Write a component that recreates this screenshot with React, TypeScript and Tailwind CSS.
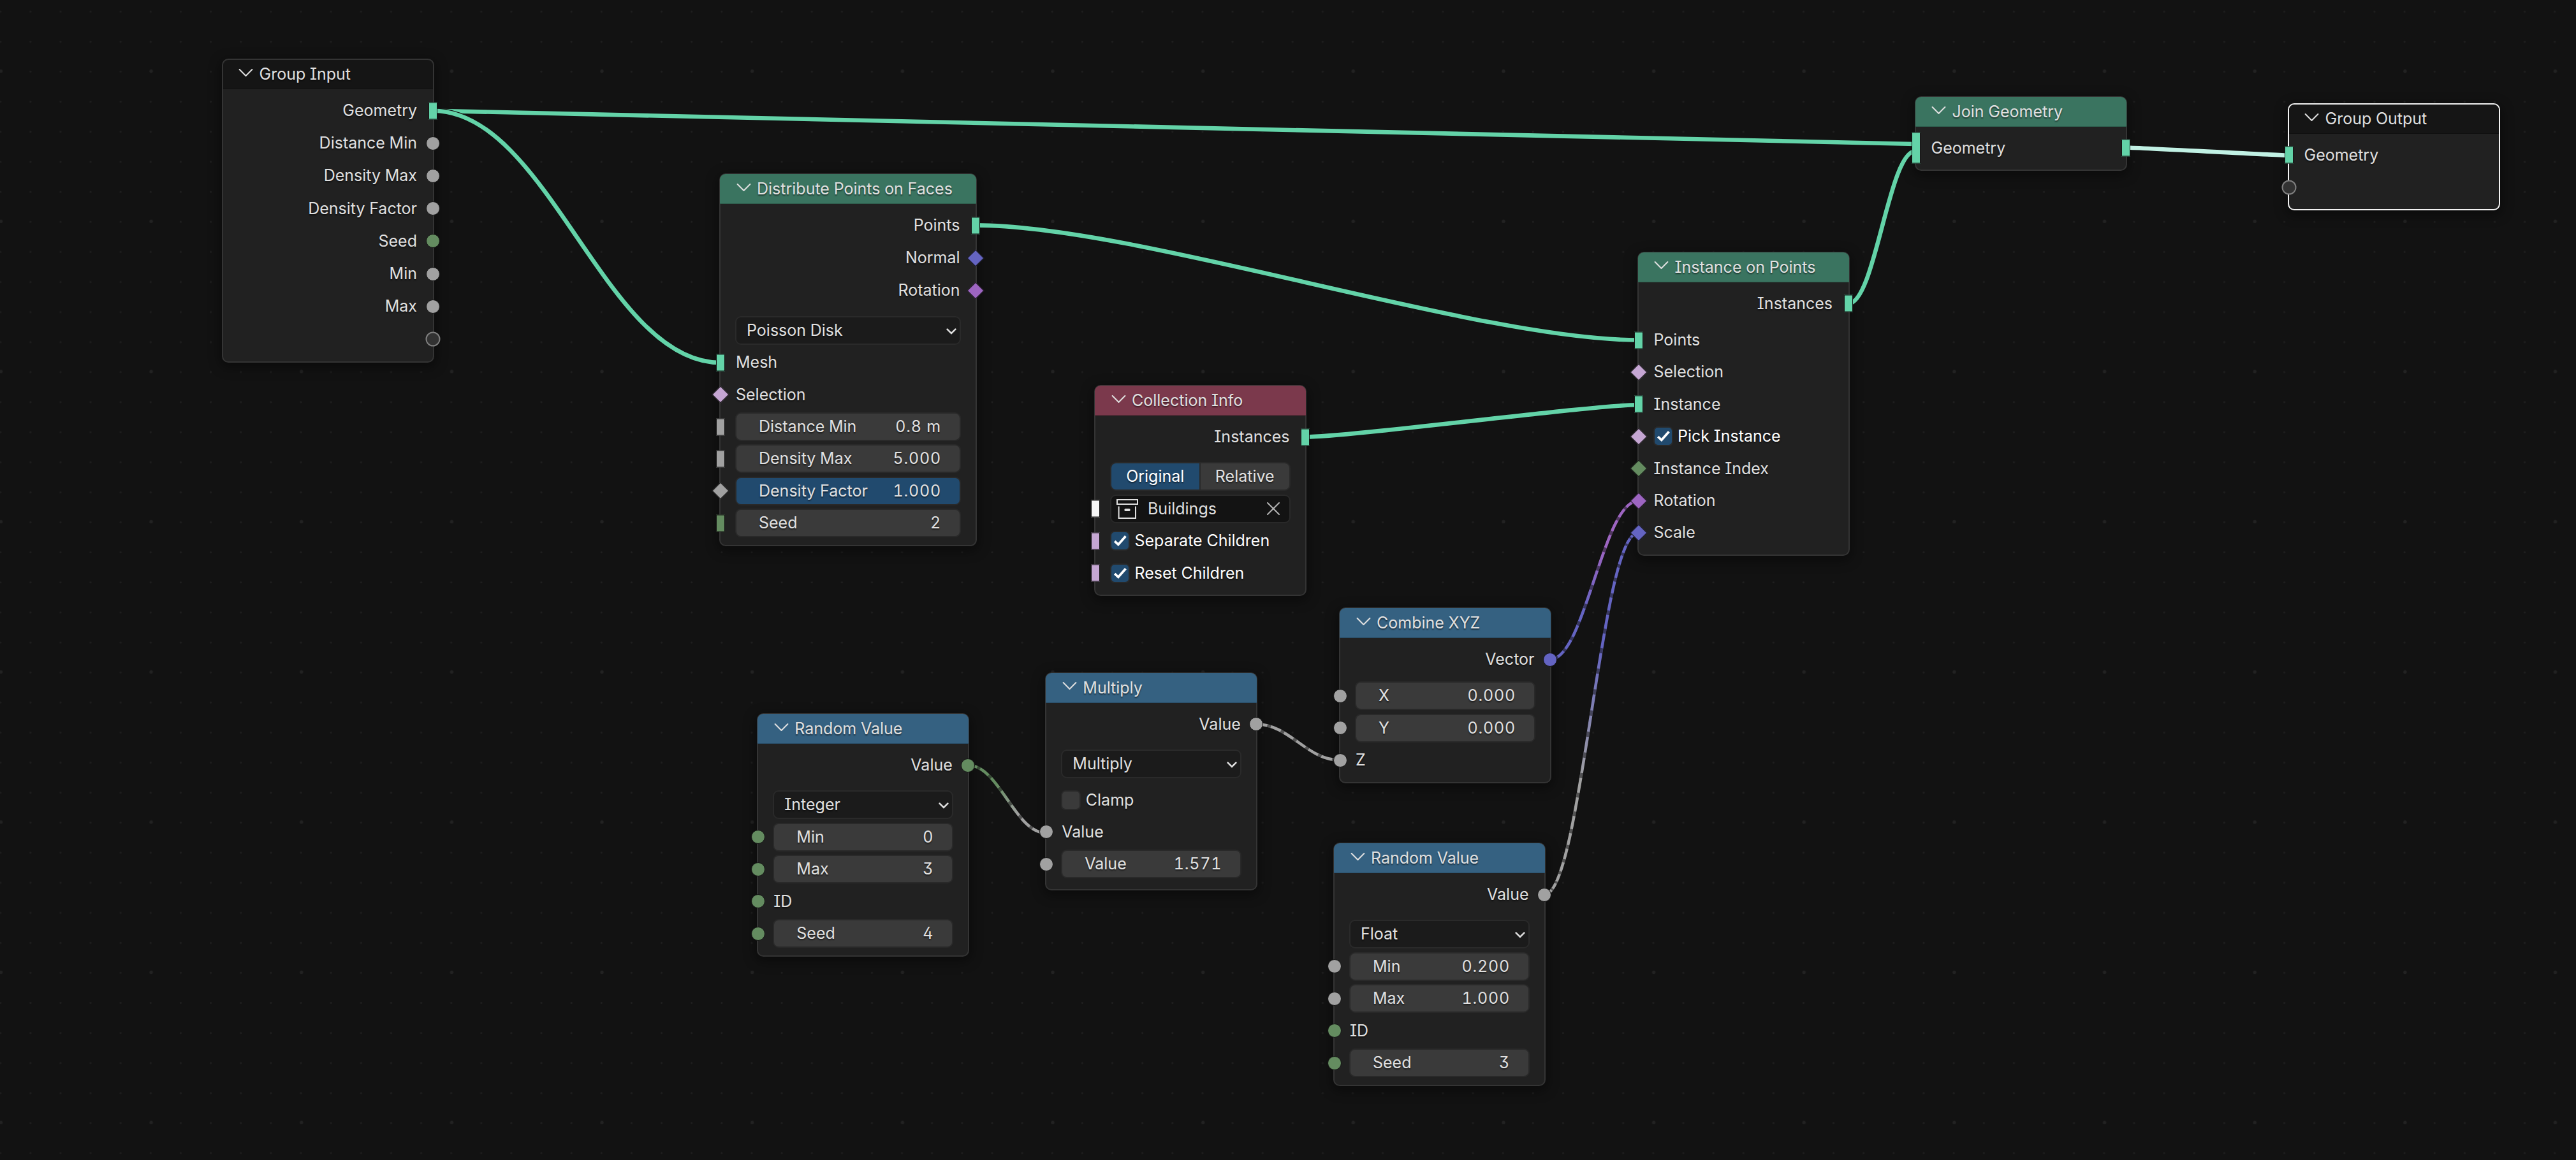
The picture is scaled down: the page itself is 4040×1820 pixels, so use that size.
import React from "react";
import clsx from "clsx";

type Tone = "geometry" | "float" | "int" | "vector" | "rotation" | "bool" | "collection" | "virtual";
type Shape = "circle" | "diamond" | "bar" | "multi";

interface SocketSpec {
  tone: Tone;
  shape: Shape;
}

const TONE_BG: Record<Tone, string> = {
  geometry: "bg-[#63d3a8]",
  float: "bg-[#a1a1a1]",
  int: "bg-[#648c60]",
  vector: "bg-[#6464c2]",
  rotation: "bg-[#9d65c1]",
  bool: "bg-[#c5a6d3]",
  collection: "bg-[#f5f5f5]",
  virtual: "bg-[#323232]",
};

const LINK_COLOR: Record<string, string> = {
  geometry: "#63d3a8",
  float: "#a1a1a1",
  int: "#648c60",
  vector: "#6464c2",
  rotation: "#9d65c1",
  active: "#c1f1e4",
};

const HEADER = {
  group: "bg-[#151515]",
  geometry: "bg-[#3a7460]",
  input: "bg-[#7b394c]",
  converter: "bg-[#356181]",
};

const SHAPE_CLASS: Record<Shape, string> = {
  circle: "w-[22px] h-[22px] rounded-full border-[1.5px]",
  diamond: "w-[19px] h-[19px] rotate-45 border-[1.5px]",
  bar: "w-[14px] h-[27px] border-[1.5px]",
  multi: "w-[14px] h-[49px] border-[1.5px]",
};

function Socket({ side, tone, shape }: SocketSpec & { side: "left" | "right" }) {
  return (
    <span
      className={clsx(
        "absolute z-20 top-1/2 -translate-y-1/2",
        side === "left" ? "left-0 -translate-x-1/2" : "right-0 translate-x-1/2",
        tone === "virtual" ? "w-[23px] h-[23px] rounded-full border-2 border-[#7f7f7f]" : [SHAPE_CLASS[shape], "border-[#141414]"],
        TONE_BG[tone],
      )}
    />
  );
}

interface NodeProps {
  x: number;
  y: number;
  title: string;
  kind: keyof typeof HEADER;
  width?: string;
  pad?: string;
  selected?: boolean;
  children: React.ReactNode;
}

function Node({ x, y, title, kind, width = "w-[333px]", pad = "pb-[9px]", selected, children }: NodeProps) {
  return (
    <section
      className={clsx(
        "absolute flex flex-col rounded-[10px] border-2 bg-[#212121] shadow-[0_5px_18px_3px_rgba(0,0,0,0.38)]",
        selected ? "border-[#f2f2f2]" : "border-[#343434]",
        width,
        pad,
      )}
      style={{ left: x, top: y }}
    >
      <header
        className={clsx(
          "flex items-center rounded-t-[9px] border-b border-black/20",
          kind === "group" ? "h-[46px] mb-[8px] pl-[26px]" : "h-[47px] -mt-px -mx-px mb-[8px] pl-[27px]",
          HEADER[kind],
        )}
      >
        <svg width="23" height="14" viewBox="0 0 23 14" fill="none" className="shrink-0 -ml-[1.5px] -mt-[5px]">
          <path d="M1.6 2 L11.5 12 L21.4 2" stroke="#e0e0e0" strokeWidth="2" strokeLinecap="round" strokeLinejoin="round" />
        </svg>
        <h2 className={clsx("ml-[9.5px] whitespace-nowrap", kind === "group" ? "mt-0" : "mt-[1.5px]")}>{title}</h2>
      </header>
      {children}
    </section>
  );
}

function Output({ label, tone, shape = "circle" }: { label?: string; tone: Tone; shape?: Shape }) {
  return (
    <div className="relative flex items-center justify-end h-[51.2px] pr-[24.5px]">
      {label}
      <Socket side="right" tone={tone} shape={shape} />
    </div>
  );
}

function Input({ tone, shape = "circle", label, children }: { tone?: Tone; shape?: Shape; label?: string; children?: React.ReactNode }) {
  return (
    <div className="relative flex items-center h-[50.4px] px-[23px]">
      {tone && <Socket side="left" tone={tone} shape={shape} />}
      {label && <span className="ml-px">{label}</span>}
      {children}
    </div>
  );
}

function Field({ label, value, filled }: { label: string; value: string; filled?: boolean }) {
  return (
    <div
      className={clsx(
        "flex flex-1 items-center justify-between h-[45px] pl-[35px] pr-[29px] rounded-[9px] border-2 border-[#292929]",
        filled ? "bg-[#214a6e]" : "bg-[#3a3a3a]",
      )}
    >
      <span>{label}</span>
      <span className="tracking-[0.8px]">{value}</span>
    </div>
  );
}

function Dropdown({ value }: { value: string }) {
  return (
    <div className="flex items-center h-[51px] px-[23px]">
      <div className="flex flex-1 items-center justify-between h-[45px] pl-[16px] pr-[4px] rounded-[9px] border-2 border-[#2a2a2a] bg-[#1b1b1b]">
        <span>{value}</span>
        <svg width="18" height="12" viewBox="0 0 18 12" fill="none" className="mt-[3px]">
          <path d="M2.6 2.6 L9 8.9 L15.4 2.6" stroke="#e0e0e0" strokeWidth="2.6" strokeLinecap="round" strokeLinejoin="miter" />
        </svg>
      </div>
    </div>
  );
}

function Checkbox({ label, checked }: { label: string; checked?: boolean }) {
  return (
    <label className="flex items-center gap-[7.5px]">
      <span
        className={clsx(
          "flex items-center justify-center w-[31px] h-[31px] rounded-[7px] border-2 border-[#292929]",
          checked ? "bg-[#214a6e]" : "bg-[#3a3a3a]",
        )}
      >
        {checked && (
          <svg width="27" height="27" viewBox="0 0 27 27" fill="none">
            <path d="M5.2 14.2 L10.8 19.4 L22.4 6.2" stroke="#fff" strokeWidth="3.8" />
          </svg>
        )}
      </span>
      <span className={clsx(checked && "text-white")}>{label}</span>
    </label>
  );
}

interface LinkSpec {
  id: string;
  from: [number, number];
  to: [number, number];
  a: string;
  b: string;
  field?: boolean;
}

const LINKS: LinkSpec[] = [
  { id: "input-join", from: [679, 173.7], to: [3004, 226], a: "geometry", b: "geometry" },
  { id: "input-distribute", from: [679, 173.7], to: [1129.5, 569], a: "geometry", b: "geometry" },
  { id: "distribute-instance", from: [1530, 353.4], to: [2569, 533.5], a: "geometry", b: "geometry" },
  { id: "collection-instance", from: [2047.5, 685.5], to: [2569, 635.3], a: "geometry", b: "geometry" },
  { id: "instance-join", from: [2899, 476.3], to: [3004, 237], a: "geometry", b: "geometry" },
  { id: "join-output", from: [3333.5, 231.5], to: [3589, 243.7], a: "active", b: "active" },
  { id: "random-multiply", from: [1518.5, 1200.7], to: [1640.5, 1307], a: "int", b: "float", field: true },
  { id: "multiply-combine", from: [1970.5, 1136.3], to: [2101.5, 1192.7], a: "float", b: "float", field: true },
  { id: "combine-rotation", from: [2431, 1034.7], to: [2569, 786], a: "vector", b: "rotation", field: true },
  { id: "random-scale", from: [2422, 1403.7], to: [2569, 836.3], a: "float", b: "vector", field: true },
];

const CURVING = 4;

// handles flatten out when the link is close to horizontal
function controlPoints({ from: [x0, y0], to: [x1, y1] }: LinkSpec) {
  const dx = Math.abs(x1 - x0);
  const slope = Math.abs(y1 - y0) / dx;
  const h = CURVING * 0.1 * dx * Math.min(1, slope * (4.5 - 0.25 * CURVING));
  return [[x0, y0], [x0 + h, y0], [x1 - h, y1], [x1, y1]];
}

function pointAt(p: number[][], t: number) {
  const u = 1 - t;
  const w = [u * u * u, 3 * u * u * t, 3 * u * t * t, t * t * t];
  return [0, 1].map(i => w.reduce((sum, k, j) => sum + k * p[j][i], 0).toFixed(1)).join(" ");
}

// dark gaps sit at even steps of the curve parameter, not of its length
function dashPath(link: LinkSpec) {
  const p = controlPoints(link);
  const count = Math.hypot(p[3][0] - p[0][0], p[3][1] - p[0][1]) / 22.9;
  let d = "";
  for (let i = 0; i < count; i++) {
    const a = (i + 0.71) / count;
    const b = Math.min(1, (i + 0.96) / count);
    if (a >= 1) break;
    d += `M${pointAt(p, a)} L${pointAt(p, (a + b) / 2)} L${pointAt(p, b)} `;
  }
  return d;
}

function Link({ link }: { link: LinkSpec }) {
  const p = controlPoints(link);
  const d = `M${p[0]} C${p[1]} ${p[2]} ${p[3]}`;
  const mixed = link.a !== link.b;
  const stroke = mixed ? `url(#${link.id})` : LINK_COLOR[link.a];
  return (
    <g fill="none">
      {mixed && (
        <linearGradient id={link.id} gradientUnits="userSpaceOnUse" x1={p[0][0]} y1={p[0][1]} x2={p[3][0]} y2={p[3][1]}>
          <stop offset="0.32" stopColor={LINK_COLOR[link.a]} />
          <stop offset="0.68" stopColor={LINK_COLOR[link.b]} />
        </linearGradient>
      )}
      <path d={d} stroke="#121212" strokeWidth={link.field ? 6.5 : 8.8} />
      <path d={d} stroke={stroke} strokeWidth={link.field ? 4.6 : 6.6} />
      {link.field && <path d={dashPath(link)} stroke="#121212" strokeOpacity="0.54" strokeWidth="4.8" />}
    </g>
  );
}

const STEPS = [0, 1, 2, 3, 4];

function Grid() {
  return (
    <svg className="absolute inset-0" width="4040" height="1820">
      <pattern id="dots" patternUnits="userSpaceOnUse" x="-22.4" y="88.2" width="235.65" height="235.65">
        {STEPS.map(r => STEPS.map(c => (
          <circle key={`${r}-${c}`} cx={23.1 + c * 47.13} cy={24.3 + r * 47.13} r="1.5" fill="#1f1f1f" />
        )))}
        <circle cx="23.9" cy="23.4" r="2.6" fill="#222222" />
      </pattern>
      <rect width="4040" height="1820" fill="url(#dots)" />
    </svg>
  );
}

export default function App() {
  return (
    <main className="relative w-[4040px] h-[1820px] overflow-hidden bg-[#121212] font-['Inter',sans-serif] text-[25px] leading-none text-[#e0e0e0] [font-feature-settings:'cv08','tnum','cv09','cv02'] [text-shadow:0_2px_2px_rgba(0,0,0,0.5)]">
      <Grid />

      <Node x={347.5} y={92} title="Group Input" kind="group">
        <Output label="Geometry" tone="geometry" shape="bar" />
        <Output label="Distance Min" tone="float" />
        <Output label="Density Max" tone="float" />
        <Output label="Density Factor" tone="float" />
        <Output label="Seed" tone="int" />
        <Output label="Min" tone="float" />
        <Output label="Max" tone="float" />
        <Output tone="virtual" />
      </Node>

      <Node x={1128} y={272} title="Distribute Points on Faces" kind="geometry" width="w-[404px]">
        <Output label="Points" tone="geometry" shape="bar" />
        <Output label="Normal" tone="vector" shape="diamond" />
        <Output label="Rotation" tone="rotation" shape="diamond" />
        <div className="h-[11px]" />
        <Dropdown value="Poisson Disk" />
        <Input tone="geometry" shape="bar" label="Mesh" />
        <Input tone="bool" shape="diamond" label="Selection" />
        <Input tone="float" shape="bar"><Field label="Distance Min" value="0.8 m" /></Input>
        <Input tone="float" shape="bar"><Field label="Density Max" value="5.000" /></Input>
        <Input tone="float" shape="diamond"><Field label="Density Factor" value="1.000" filled /></Input>
        <Input tone="int" shape="bar"><Field label="Seed" value="2" /></Input>
      </Node>

      <Node x={1716} y={604} title="Collection Info" kind="input">
        <Output label="Instances" tone="geometry" shape="bar" />
        <div className="flex items-center h-[51px] mt-[11px] px-[23px]">
          <div className="grid grid-cols-2 flex-1 h-[45px] rounded-[9px] border-2 border-[#292929] overflow-hidden text-center leading-[41px]">
            <span className="bg-[#214a6e] text-white border-r-2 border-[#292929]">Original</span>
            <span className="bg-[#3a3a3a]">Relative</span>
          </div>
        </div>
        <Input tone="collection" shape="bar">
          <div className="flex flex-1 items-center h-[45px] pl-[7px] pr-[15px] rounded-[9px] border-2 border-[#292929] bg-[#131313]">
            <svg width="36" height="34" viewBox="0 0 36 34" fill="none" stroke="#e0e0e0" strokeWidth="2">
              <path d="M2 3 H34 V10 H2 Z M4.6 13.6 V32 H31 V13.6" />
              <rect x="13.5" y="17" width="9" height="4" rx="1.6" fill="#e0e0e0" stroke="none" />
            </svg>
            <span className="flex-1 ml-[14px]">Buildings</span>
            <svg width="20" height="20" viewBox="0 0 20 20" stroke="#b4b4b4" strokeWidth="2" strokeLinecap="round">
              <path d="M1 1 L19 19 M19 1 L1 19" />
            </svg>
          </div>
        </Input>
        <Input tone="bool" shape="bar"><Checkbox label="Separate Children" checked /></Input>
        <Input tone="bool" shape="bar"><Checkbox label="Reset Children" checked /></Input>
      </Node>

      <Node x={2567.5} y={394.7} title="Instance on Points" kind="geometry">
        <Output label="Instances" tone="geometry" shape="bar" />
        <div className="h-[6.5px]" />
        <Input tone="geometry" shape="bar" label="Points" />
        <Input tone="bool" shape="diamond" label="Selection" />
        <Input tone="geometry" shape="bar" label="Instance" />
        <Input tone="bool" shape="diamond"><Checkbox label="Pick Instance" checked /></Input>
        <Input tone="int" shape="diamond" label="Instance Index" />
        <Input tone="rotation" shape="diamond" label="Rotation" />
        <Input tone="vector" shape="diamond" label="Scale" />
      </Node>

      <Node x={3002.5} y={151} title="Join Geometry" kind="geometry">
        <div className="relative flex items-center h-[50.4px] px-[24px]">
          <Socket side="left" tone="geometry" shape="multi" />
          <span>Geometry</span>
          <Socket side="right" tone="geometry" shape="bar" />
        </div>
      </Node>

      <Node x={3587.5} y={162} title="Group Output" kind="group" selected>
        <Input tone="geometry" shape="bar" label="Geometry" />
        <Input tone="virtual" />
      </Node>

      <Node x={1187.3} y={1119} title="Random Value" kind="converter">
        <Output label="Value" tone="int" />
        <div className="h-[11px]" />
        <Dropdown value="Integer" />
        <Input tone="int"><Field label="Min" value="0" /></Input>
        <Input tone="int"><Field label="Max" value="3" /></Input>
        <Input tone="int" label="ID" />
        <Input tone="int"><Field label="Seed" value="4" /></Input>
      </Node>

      <Node x={1639.3} y={1054.7} title="Multiply" kind="converter" pad="pb-[14px]">
        <Output label="Value" tone="float" />
        <div className="h-[11px]" />
        <Dropdown value="Multiply" />
        <div className="h-[6px]" />
        <Input><Checkbox label="Clamp" /></Input>
        <Input tone="float" label="Value" />
        <Input tone="float"><Field label="Value" value="1.571" /></Input>
      </Node>

      <Node x={2100} y={953} title="Combine XYZ" kind="converter">
        <Output label="Vector" tone="vector" />
        <div className="h-[6.5px]" />
        <Input tone="float"><Field label="X" value="0.000" /></Input>
        <Input tone="float"><Field label="Y" value="0.000" /></Input>
        <Input tone="float" label="Z" />
      </Node>

      <Node x={2091} y={1322} title="Random Value" kind="converter">
        <Output label="Value" tone="float" />
        <div className="h-[11px]" />
        <Dropdown value="Float" />
        <Input tone="float"><Field label="Min" value="0.200" /></Input>
        <Input tone="float"><Field label="Max" value="1.000" /></Input>
        <Input tone="int" label="ID" />
        <Input tone="int"><Field label="Seed" value="3" /></Input>
      </Node>

      <svg className="absolute inset-0 z-10 pointer-events-none" width="4040" height="1820">
        {LINKS.map(link => <Link key={link.id} link={link} />)}
      </svg>
    </main>
  );
}
